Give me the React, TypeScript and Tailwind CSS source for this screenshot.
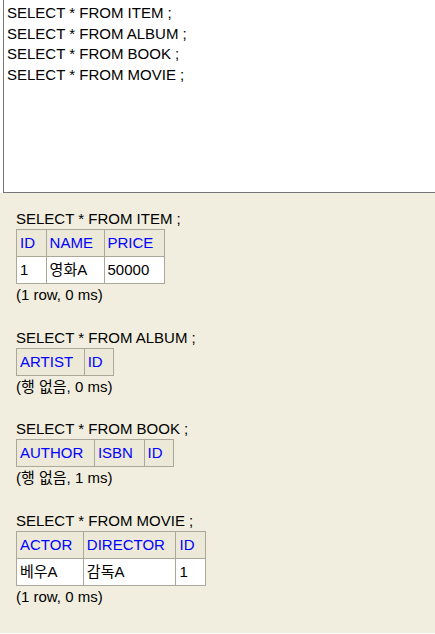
import React from "react";

type Block = {
  sql: string;
  cols: string[];
  rows: string[][];
  info: string;
};

const blocks: Block[] = [
  { sql: "SELECT * FROM ITEM ;", cols: ["ID", "NAME", "PRICE"], rows: [["1", "영화A", "50000"]], info: "(1 row, 0 ms)" },
  { sql: "SELECT * FROM ALBUM ;", cols: ["ARTIST", "ID"], rows: [], info: "(행 없음, 0 ms)" },
  { sql: "SELECT * FROM BOOK ;", cols: ["AUTHOR", "ISBN", "ID"], rows: [], info: "(행 없음, 1 ms)" },
  { sql: "SELECT * FROM MOVIE ;", cols: ["ACTOR", "DIRECTOR", "ID"], rows: [["베우A", "감독A", "1"]], info: "(1 row, 0 ms)" },
];

export default function App() {
  return (
    <div
      className="w-[435px] h-[634px] overflow-hidden bg-white text-black"
      style={{ fontFamily: '"Liberation Sans", "Noto Sans CJK KR", sans-serif' }}
    >
      <div className="h-[193px] pl-[3px]">
        <div className="h-full w-[500px] border-l border-b border-[#767676] pl-[3px] pt-[3px] text-[15px] leading-[20.7px]">
          <div>SELECT * FROM ITEM ;</div>
          <div>SELECT * FROM ALBUM ;</div>
          <div>SELECT * FROM BOOK ;</div>
          <div>SELECT * FROM MOVIE ;</div>
        </div>
      </div>
      <div className="h-[440px] bg-[#f1eedf] pl-[16px] pt-[15px] text-[15px] leading-[21px]">
        {blocks.map((b) => (
          <div key={b.sql}>
            <div>{b.sql}</div>
            <table className="border-collapse">
              <thead>
                <tr>
                  {b.cols.map((c) => (
                    <th
                      key={c}
                      className="border border-[#aca899] bg-[#ece9d8] pl-[3px] pr-[10.6px] py-[3px] leading-[20px] text-left font-normal text-[#0000ff]"
                    >
                      {c}
                    </th>
                  ))}
                </tr>
              </thead>
              <tbody>
                {b.rows.map((r, i) => (
                  <tr key={i}>
                    {r.map((v, j) => (
                      <td
                        key={j}
                        className="border border-[#aca899] bg-white pl-[3px] pr-[10.6px] py-[3px] leading-[20px]"
                      >
                        {v}
                      </td>
                    ))}
                  </tr>
                ))}
              </tbody>
            </table>
            <div>{b.info}</div>
            <div className="h-[21.6px]" />
          </div>
        ))}
      </div>
    </div>
  );
}
